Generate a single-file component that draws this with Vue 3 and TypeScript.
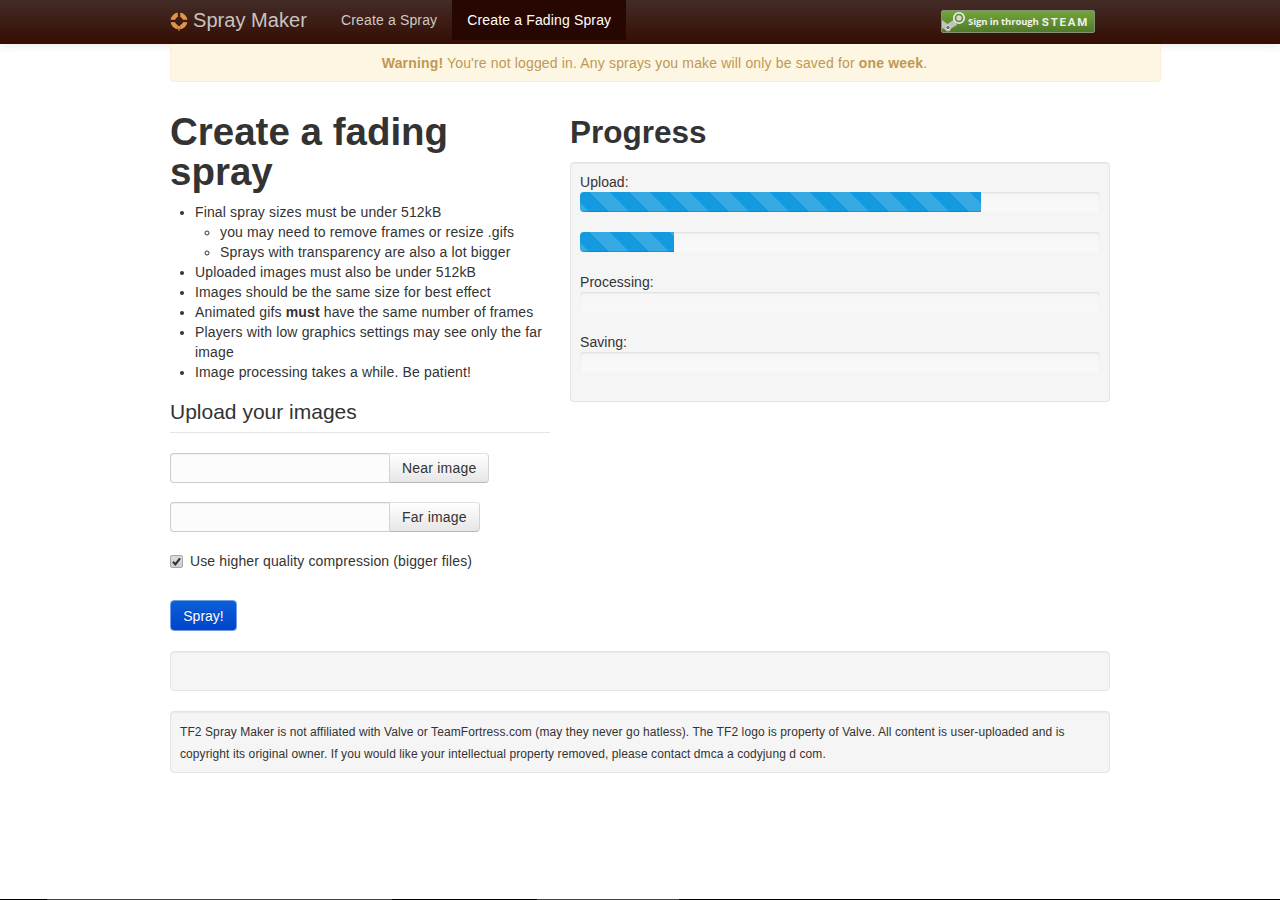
<script setup lang="ts">
const rules = [
  'Uploaded images must also be under 512kB',
  'Images should be the same size for best effect',
]
const bars = [
  { label: 'Upload:', width: 77.1 },
  { label: '', width: 18.1 },
  { label: 'Processing:', width: 0 },
  { label: 'Saving:', width: 0 },
]
</script>

<template>
  <div class="page">
    <header class="navbar">
      <div class="nav-inner">
        <a class="brand">
          <svg class="logo" viewBox="0 0 18 20" width="18" height="20">
            <circle cx="9" cy="9" r="6.2" fill="none" stroke="#e39446" stroke-width="4.6" />
            <rect x="7.8" y="0" width="2.4" height="18" fill="#3c1d15" />
            <rect x="0" y="7.8" width="18" height="2.4" fill="#3c1d15" />
            <path d="M7.6 14 L10.4 14 L9.3 19 L8.7 19 Z" fill="#e39446" />
          </svg>
          <span>Spray Maker</span>
        </a>
        <a class="nav-link">Create a Spray</a>
        <a class="nav-link active">Create a Fading Spray</a>
        <a class="steam">
          <svg class="steam-icon" viewBox="0 0 26 21" width="26" height="21">
            <path d="M0 9 L5.5 13 L12 8.5 L15 14 L9 17.5 C9 21 4 21.5 2.5 18 L0 17 Z" fill="#bfc4ba" />
            <circle cx="17" cy="7" r="5.2" fill="#5d8b2f" stroke="#e4e7df" stroke-width="1.8" />
            <circle cx="17" cy="7" r="2.7" fill="#d4d8ce" />
            <circle cx="6" cy="16.5" r="2.2" fill="#6f7469" stroke="#dfe2da" stroke-width="1" />
          </svg>
          <span class="steam-small">Sign in through</span>
          <span class="steam-big">STEAM</span>
        </a>
      </div>
    </header>

    <div class="alert">
      <strong>Warning!</strong> You're not logged in. Any sprays you make will only be saved for <strong>one week</strong>.
    </div>

    <main class="content">
      <section class="left">
        <h1>Create a fading spray</h1>
        <ul class="rules">
          <li>
            Final spray sizes must be under 512kB
            <ul>
              <li>you may need to remove frames or resize .gifs</li>
              <li>Sprays with transparency are also a lot bigger</li>
            </ul>
          </li>
          <li v-for="r in rules" :key="r">{{ r }}</li>
          <li>Animated gifs <strong>must</strong> have the same number of frames</li>
          <li>Players with low graphics settings may see only the far image</li>
          <li>Image processing takes a while. Be patient!</li>
        </ul>
        <div class="legend">Upload your images</div>
        <div class="file-row">
          <div class="file-input"></div>
          <div class="file-btn">Near image</div>
        </div>
        <div class="file-row">
          <div class="file-input"></div>
          <div class="file-btn">Far image</div>
        </div>
        <label class="check">
          <span class="box">
            <input type="checkbox" checked />
            <svg class="tick" viewBox="0 0 13 13" width="13" height="13">
              <path d="M3 6.8 L5.4 9.4 L10 3.4" fill="none" stroke="#333" stroke-width="2.2" />
            </svg>
          </span>
          <span>Use higher quality compression (bigger files)</span>
        </label>
        <button class="spray">Spray!</button>
      </section>

      <section class="right">
        <h2>Progress</h2>
        <div class="well progress-well">
          <div v-for="(b, i) in bars" :key="i" class="bar-block">
            <div v-if="b.label" class="bar-label">{{ b.label }}</div>
            <div class="progress">
              <div v-if="b.width" class="fill" :style="{ width: b.width + '%' }"></div>
            </div>
          </div>
        </div>
      </section>
    </main>

    <div class="well empty-well"></div>
    <div class="well small-well">
      TF2 Spray Maker is not affiliated with Valve or TeamFortress.com (may they never go hatless). The TF2 logo is property of Valve. All content is user-uploaded and is copyright its original owner. If you would like your intellectual property removed, please contact dmca a codyjung d com.
    </div>

    <div class="edge">
      <i class="seg seg-a"></i>
      <i class="seg seg-b"></i>
    </div>
  </div>
</template>

<style>
html, body { margin: 0; background: #fff; }
</style>

<style scoped>
.page {
  min-height: 900px;
  display: flex;
  flex-direction: column;
  font-family: "Liberation Sans", Arial, sans-serif;
  font-size: 14px;
  line-height: 20px;
  color: #333;
  box-sizing: border-box;
}
.navbar {
  height: 44px;
  background: linear-gradient(#432c27, #350d02);
  box-shadow: 0 1px 10px rgba(0, 0, 0, 0.1);
}
.nav-inner {
  margin-left: 170px;
  width: 925px;
  display: flex;
  align-items: flex-start;
  height: 44px;
}
.brand {
  display: flex;
  align-items: center;
  height: 40px;
  color: #c9c3c0;
  font-size: 20px;
  letter-spacing: 0.05px;
  width: 156px;
  flex: none;
}
.logo { margin-right: 5px; margin-top: 3px; }
.nav-link {
  height: 40px;
  line-height: 40px;
  padding: 0 15px;
  color: #cfc8c5;
  font-size: 14px;
  letter-spacing: 0.15px;
}
.nav-link.active {
  background: #270701;
  color: #fff;
}
.steam {
  margin-left: auto;
  margin-top: 10px;
  width: 154px;
  height: 23px;
  box-sizing: border-box;
  border: 1px solid #84927a;
  border-radius: 2px;
  background: linear-gradient(#74a637, #4f7a2c);
  display: flex;
  align-items: center;
  color: #fff;
  white-space: nowrap;
  overflow: hidden;
}
.steam-icon { flex: none; }
.steam-small {
  font-family: "Open Sans", sans-serif;
  font-size: 9.5px;
  font-weight: bold;
  color: #f0f3ea;
  line-height: 21px;
  letter-spacing: -0.1px;
}
.steam-big {
  font-family: "Roboto", sans-serif;
  font-size: 11.5px;
  font-weight: bold;
  letter-spacing: 1.8px;
  margin-left: 3px;
  color: #eef2e8;
}
.alert {
  margin: 0 0 0 170px;
  width: 991px;
  height: 38px;
  box-sizing: border-box;
  padding-right: 22px;
  background: #fdf6e2;
  border: 1px solid #fbeed5;
  border-top: 0;
  border-radius: 0 0 4px 4px;
  color: #c09853;
  text-align: center;
  line-height: 39px;
  letter-spacing: 0.16px;
}
.content {
  margin: 30px 0 0 170px;
  display: flex;
  gap: 20px;
}
.left { width: 380px; flex: none; }
.right { width: 540px; flex: none; }
h1 {
  margin: 0;
  font-size: 38.5px;
  line-height: 40px;
  font-weight: bold;
  color: #333;
}
h2 {
  margin: 0 0 10px;
  font-size: 31.5px;
  line-height: 40px;
  font-weight: bold;
}
.rules {
  margin: 10px 0 10px 25px;
  padding: 0;
  letter-spacing: 0.14px;
}
.rules ul { margin: 0 0 0 25px; padding: 0; list-style: circle; }
.legend {
  font-size: 21px;
  line-height: 40px;
  border-bottom: 1px solid #e5e5e5;
  margin-bottom: 20px;
}
.file-row {
  display: flex;
  height: 30px;
  margin-bottom: 19px;
}
.file-input {
  width: 219px;
  box-sizing: border-box;
  border: 1px solid #ccc;
  border-right: 0;
  border-radius: 4px 0 0 4px;
  background: #fcfcfc;
  box-shadow: inset 0 1px 1px rgba(0, 0, 0, 0.05);
}
.file-btn {
  box-sizing: border-box;
  padding: 0 12px;
  border: 1px solid #ccc;
  border-color: #e0e0e0 #d4d4d4 #b8b8b8;
  border-radius: 0 4px 4px 0;
  background: linear-gradient(#fff, #e6e6e6);
  line-height: 28px;
  letter-spacing: 0.2px;
}
.check {
  display: flex;
  align-items: center;
  height: 20px;
  letter-spacing: 0.13px;
}
.box {
  position: relative;
  width: 13px;
  height: 13px;
  margin-right: 7px;
  flex: none;
}
.box input {
  appearance: none;
  display: block;
  margin: 0;
  width: 13px;
  height: 13px;
  box-sizing: border-box;
  border: 1px solid #a8a8a8;
  border-radius: 2px;
  background: linear-gradient(#dcdcdc, #cfcfcf);
}
.tick { position: absolute; left: 0; top: 0; }
.spray {
  display: block;
  margin: 29px 0 0;
  width: 67px;
  height: 31px;
  padding: 0;
  font: inherit;
  color: #fff;
  text-shadow: 0 -1px 0 rgba(0, 0, 0, 0.25);
  background: linear-gradient(#0b5fd8, #0044cc);
  border: 1px solid #6f9fe0;
  border-radius: 4px;
}
.well {
  box-sizing: border-box;
  background: #f5f5f5;
  border: 1px solid #e3e3e3;
  border-radius: 4px;
  box-shadow: inset 0 1px 1px rgba(0, 0, 0, 0.05);
}
.progress-well {
  padding: 9px;
}
.bar-block { margin-bottom: 20px; }
.bar-label { height: 20px; letter-spacing: 0.05px; }
.progress {
  height: 20px;
  border-radius: 4px;
  background: linear-gradient(#f5f5f5, #f9f9f9);
  box-shadow: inset 0 1px 2px rgba(0, 0, 0, 0.1);
  overflow: hidden;
}
.fill {
  height: 100%;
  background-color: #149bdf;
  background-image: linear-gradient(45deg, rgba(255,255,255,0.15) 25%, transparent 25%, transparent 50%, rgba(255,255,255,0.15) 50%, rgba(255,255,255,0.15) 75%, transparent 75%, transparent);
  background-size: 40px 40px;
  background-position: 10px 0;
  box-shadow: inset 0 -1px 0 rgba(0, 0, 0, 0.15);
}
.empty-well {
  margin: 20px 0 0 170px;
  width: 940px;
  height: 40px;
}
.small-well {
  margin: 20px 0 0 170px;
  width: 940px;
  height: 62px;
  padding: 9px;
  font-size: 12px;
  line-height: 22px;
  letter-spacing: 0.09px;
}
.edge {
  margin-top: auto;
  height: 1px;
  background: #000;
  position: relative;
}
.seg { position: absolute; top: 0; height: 1px; background: #444; }
.seg-a { left: 47px; width: 345px; }
.seg-b { left: 537px; width: 142px; }
</style>
